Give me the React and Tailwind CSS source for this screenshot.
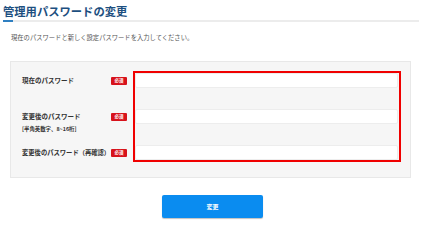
export default function App() {
  const font = { fontFamily: '"Noto Sans CJK JP", "Noto Sans", sans-serif' };
  return (
    <div className="w-[421px] h-[246px] bg-white" style={font}>
      <div className="pl-[3px] pr-[2px] pt-[3px]">
        <h1 className="text-[11.3px] leading-[16px] font-bold text-[#1d4f80]">管理用パスワードの変更</h1>
        <div className="flex h-[2px] mt-[1px]">
          <div className="w-[10px] bg-[#2f7fc1]"></div>
          <div className="flex-1 bg-[#ececec]"></div>
        </div>
      </div>
      <p className="ml-[11px] mt-[12px] text-[6.3px] leading-[8px] text-[#555]">
        現在のパスワードと新しく設定パスワードを入力してください。
      </p>
      <div className="mx-[10px] mt-[19px] h-[117px] bg-[#f6f6f6] border border-[#e8e8e8] pl-[11px] pr-[9px] pt-[9px] flex gap-[6px]">
        <div className="w-[105px] flex flex-col text-[#333]">
          <div className="h-[15px] mt-[2px] flex items-center justify-between">
            <span className="text-[6.5px] font-bold">現在のパスワード</span>
            <Badge />
          </div>
          <div className="h-[21px]"></div>
          <div className="h-[15px] flex items-center justify-between">
            <span className="text-[6.5px] font-bold">変更後のパスワード</span>
            <Badge />
          </div>
          <div className="h-[21px]">
            <span className="block text-[5.4px] leading-[8px] mt-[1px] font-bold whitespace-nowrap">[半角英数字、8~16桁]</span>
          </div>
          <div className="h-[15px] flex items-center justify-between">
            <span className="text-[6.3px] font-bold whitespace-nowrap">変更後のパスワード（再確認）</span>
            <Badge />
          </div>
        </div>
        <div className="flex-1 h-[91px] border-2 border-[#f00000] flex flex-col gap-[21px] pr-[1px]">
          <input type="password" className="h-[15px] bg-white border border-[#ededed] rounded-[2px]" />
          <input type="password" className="h-[15px] bg-white border border-[#ededed] rounded-[2px]" />
          <input type="password" className="h-[15px] bg-white border border-[#ededed] rounded-[2px]" />
        </div>
      </div>
      <div className="flex justify-center pl-[4px] mt-[17px]">
        <button className="w-[101px] h-[23px] bg-[#0a8cf0] rounded-[2px] shadow-[0_1px_1px_rgba(0,0,0,0.25)] text-white text-[6px] font-bold">
          変更
        </button>
      </div>
    </div>
  );
}

function Badge() {
  return (
    <span className="w-[16px] h-[8px] bg-[#d7121b] rounded-[1px] text-white text-[4.5px] font-bold flex items-center justify-center">
      必須
    </span>
  );
}
